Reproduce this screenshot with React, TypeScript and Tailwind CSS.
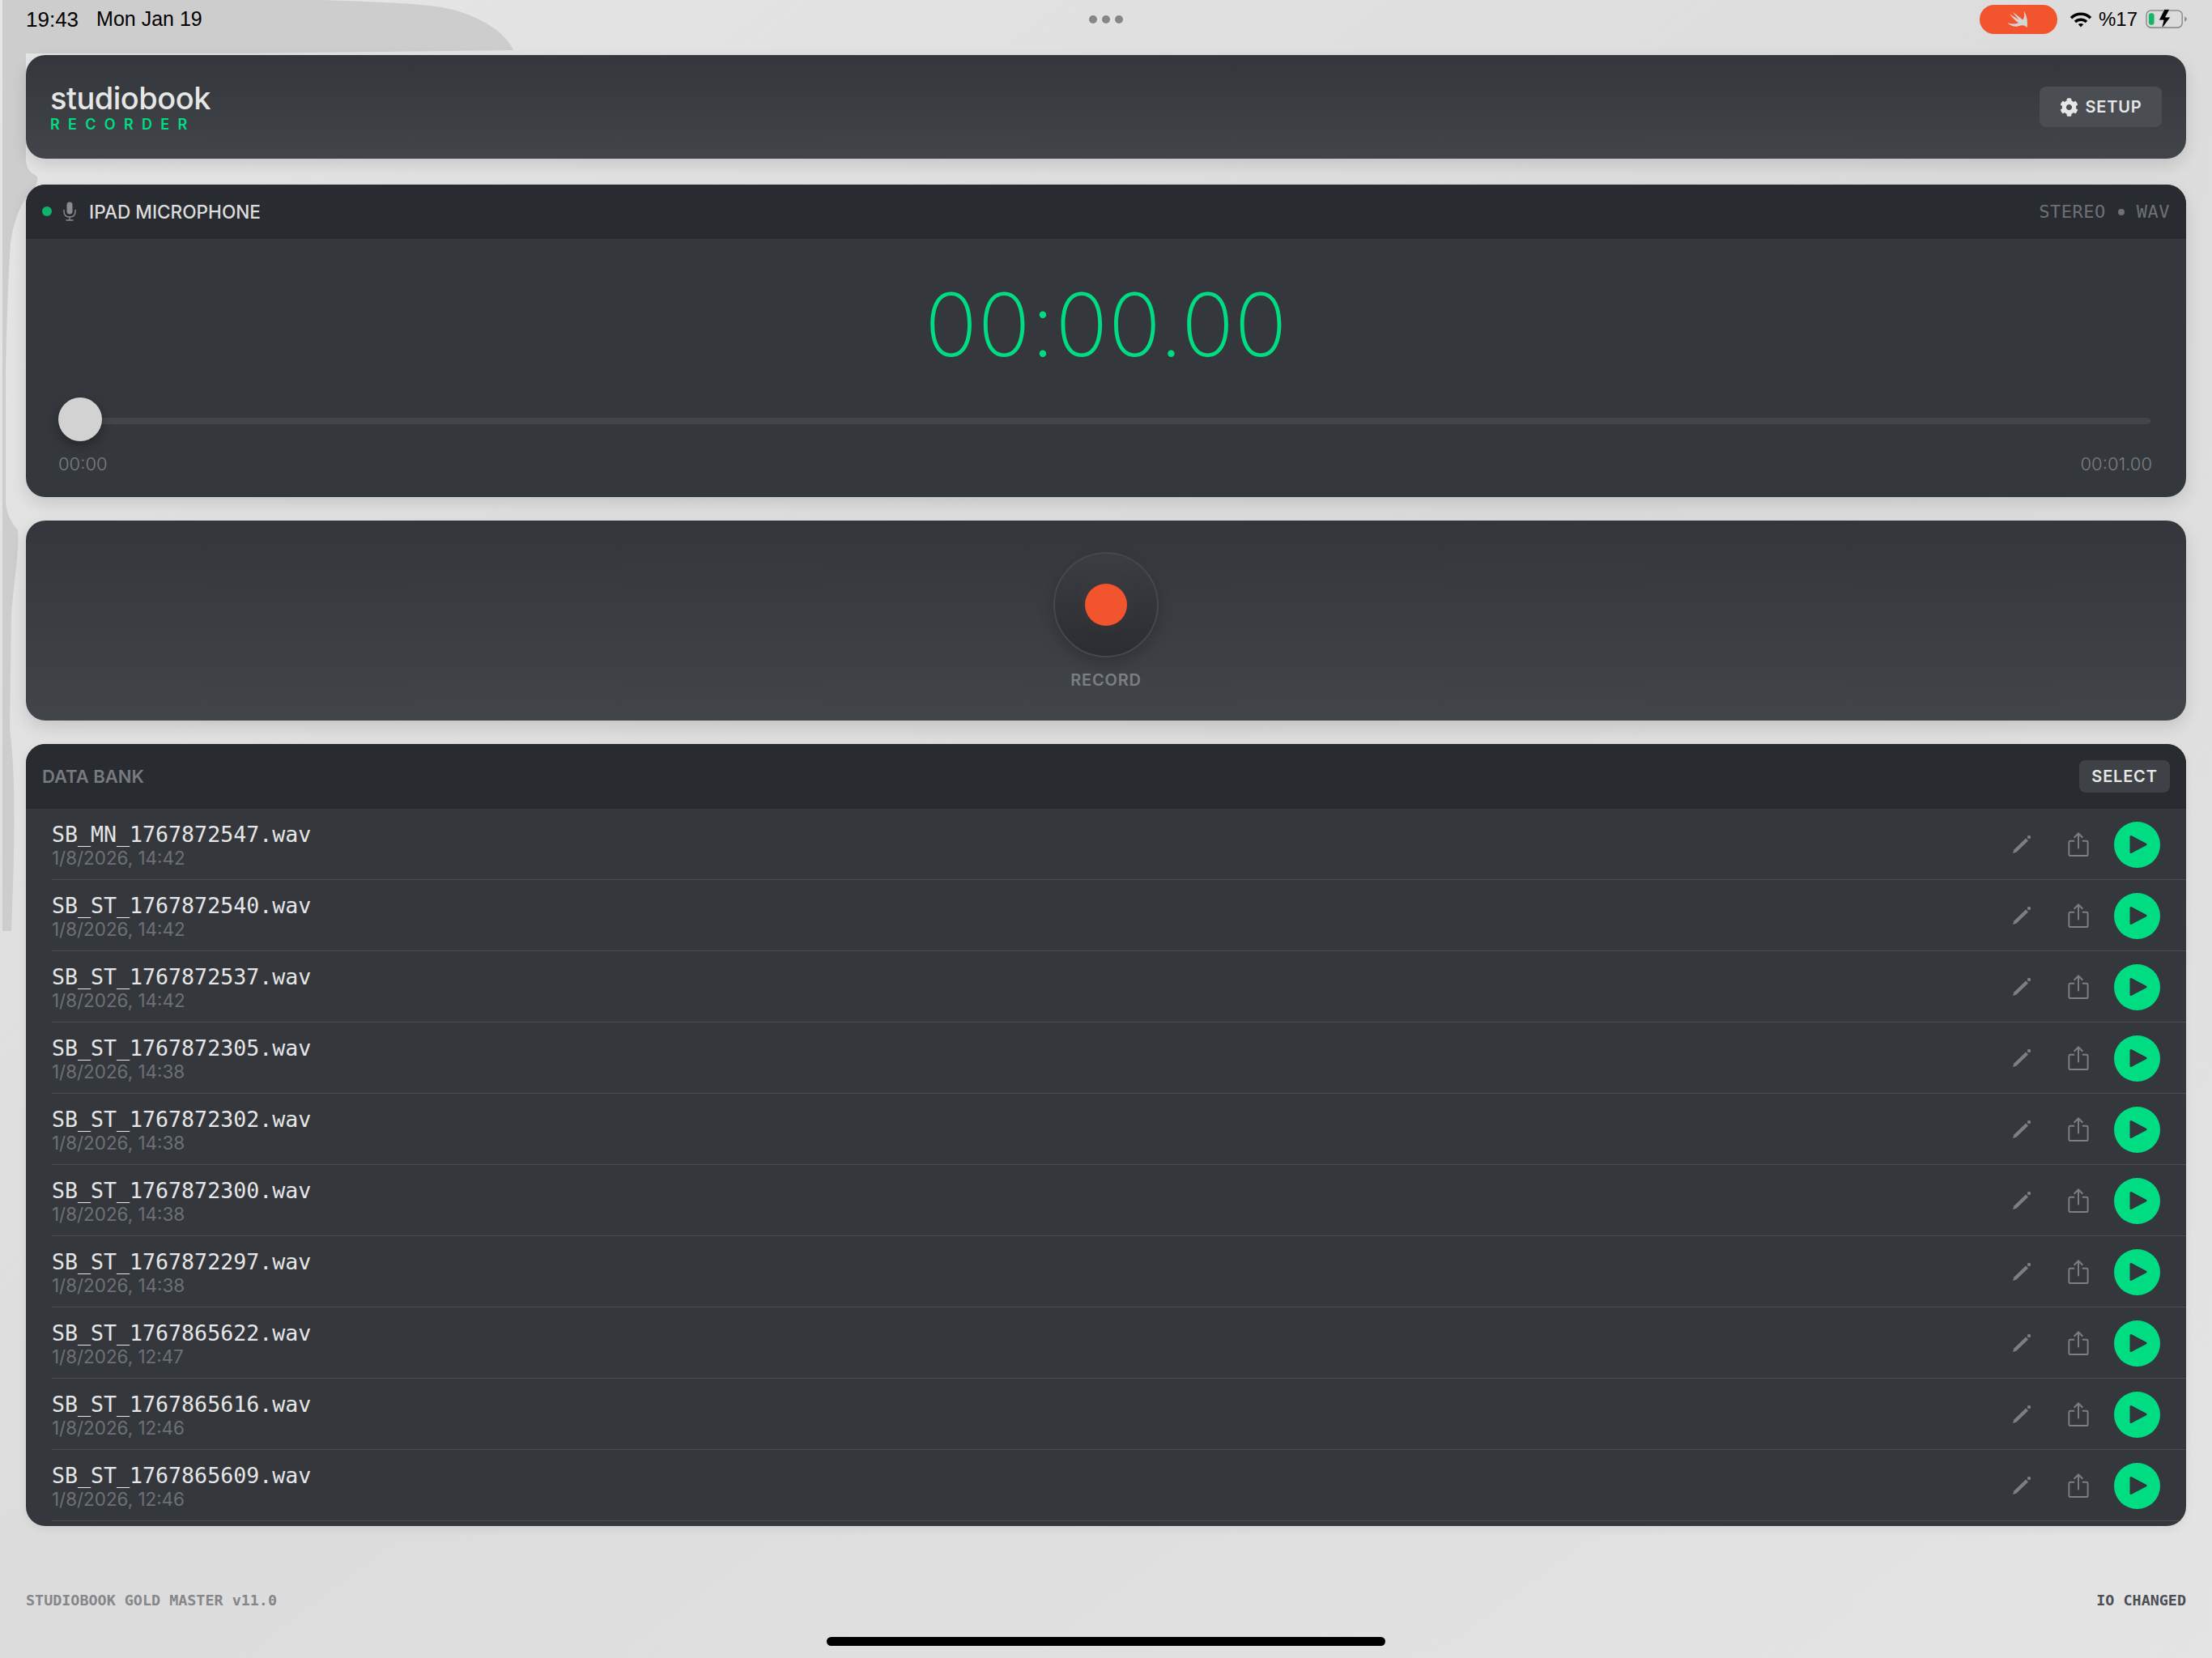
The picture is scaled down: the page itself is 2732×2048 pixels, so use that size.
import React from 'react';
import { FaCog } from 'react-icons/fa';

const SANS = "font-['Inter','Liberation_Sans',sans-serif]";
const MONO = "font-['DejaVu_Sans_Mono','Liberation_Mono',monospace]";

const recordings = [
  { name: 'SB_MN_1767872547.wav', date: '1/8/2026, 14:42' },
  { name: 'SB_ST_1767872540.wav', date: '1/8/2026, 14:42' },
  { name: 'SB_ST_1767872537.wav', date: '1/8/2026, 14:42' },
  { name: 'SB_ST_1767872305.wav', date: '1/8/2026, 14:38' },
  { name: 'SB_ST_1767872302.wav', date: '1/8/2026, 14:38' },
  { name: 'SB_ST_1767872300.wav', date: '1/8/2026, 14:38' },
  { name: 'SB_ST_1767872297.wav', date: '1/8/2026, 14:38' },
  { name: 'SB_ST_1767865622.wav', date: '1/8/2026, 12:47' },
  { name: 'SB_ST_1767865616.wav', date: '1/8/2026, 12:46' },
  { name: 'SB_ST_1767865609.wav', date: '1/8/2026, 12:46' },
];

function PencilIcon() {
  return (
    <svg width="24" height="24" viewBox="0 0 24 24" fill="none">
      <path d="M1 23 L2.5 18.5 L17 4.5 L20 7.5 L5.5 21.5 Z" fill="#7b7e82" />
      <circle cx="21" cy="3" r="2.2" fill="#7b7e82" />
    </svg>
  );
}

function ShareIcon() {
  return (
    <svg width="26" height="31" viewBox="0 0 26 32" fill="none" stroke="#7b7e82" strokeWidth="2">
      <path d="M8 11 H3 Q1 11 1 13 V28 Q1 30 3 30 H23 Q25 30 25 28 V13 Q25 11 23 11 H18" />
      <path d="M13 21 V2 M7.5 7 L13 1.5 L18.5 7" />
    </svg>
  );
}

function PlayIcon() {
  return (
    <svg width="22" height="24" viewBox="0 0 22 24">
      <path d="M2 2.5 L20 12 L2 21.5 Z" fill="#33373c" stroke="#33373c" strokeWidth="3" strokeLinejoin="round" />
    </svg>
  );
}

function MicIcon() {
  return (
    <svg width="16" height="24" viewBox="0 0 16 24" fill="none">
      <rect x="4.5" y="0.5" width="7" height="15" rx="3.5" fill="#8a8c90" />
      <path d="M1 10 V12 Q1 19 8 19 Q15 19 15 12 V10 M8 19 V23 M3.5 23 H12.5" stroke="#8a8c90" strokeWidth="1.4" />
    </svg>
  );
}

function SwiftIcon() {
  return (
    <svg width="27" height="24" viewBox="0 0 28 24">
      <path d="M25.5 22.5 C26.5 15 25.5 7 21.5 1 C22.5 6 22 10 20 12.5 C16 9.5 11 5.5 7 2.5 C9.5 6 12.5 9.5 15 12.5 C11 10 7 7.5 3 5 C6.5 9 10.5 13.5 14.5 16.5 C10.5 18.5 5.5 18 0.5 16.5 C4.5 20.5 10 22 14.5 20.5 C18 19.5 21 19 23 20.5 C24 21.2 25 22 25.5 22.5 Z" fill="#d4d4d4" />
    </svg>
  );
}

function WifiIcon() {
  return (
    <svg width="28" height="20" viewBox="0 0 28 20" fill="none">
      <path d="M2 8.2 C9 1.6 19 1.6 26 8.2" stroke="#000" strokeWidth="3.6" />
      <path d="M7 13 C11 9.4 17 9.4 21 13" stroke="#000" strokeWidth="3.6" />
      <path d="M10.8 16 C12.6 14.6 15.4 14.6 17.2 16 L14 19.5 Z" fill="#000" />
    </svg>
  );
}

function BatteryIcon() {
  return (
    <svg width="52" height="28" viewBox="0 0 54 28">
      <rect x="1" y="2.5" width="46" height="22" rx="6" fill="none" stroke="#8e8e8e" strokeWidth="1.6" />
      <rect x="4" y="6" width="7" height="15" rx="3" fill="#18b566" />
      <path d="M50 10 Q53 12 53 13.5 Q53 15 50 17 Z" fill="#8e8e8e" />
      <path d="M24 1 L17 15 H23 L20 27 L32 11 H25.5 L31 1 Z" fill="#000" stroke="#dcdcdc" strokeWidth="0.8" />
    </svg>
  );
}

function RecordingRow({ name, date }: { name: string; date: string }) {
  return (
    <div className="ml-[32px] flex h-[88px] items-center justify-between border-b border-[#494d52] pr-[32px] pt-[1px]">
      <div className="flex flex-col pt-[2px]">
        <span className={`${MONO} text-[26.6px] leading-[30px] text-[#e6e6e6]`}>{name}</span>
        <span className={`${SANS} mt-[1px] text-[22.4px] leading-[26px] text-[#6d7175]`}>{date}</span>
      </div>
      <div className="flex items-center">
        <span className="flex h-[32px] w-[32px] items-center justify-center">
          <PencilIcon />
        </span>
        <span className="ml-[38px] flex h-[32px] w-[32px] items-center justify-center">
          <ShareIcon />
        </span>
        <button className="ml-[28px] flex h-[57px] w-[57px] items-center justify-center rounded-full bg-[#00dc82] pl-[3px]">
          <PlayIcon />
        </button>
      </div>
    </div>
  );
}

export default function App() {
  return (
    <div className={`${SANS} relative flex h-[2048px] w-[2732px] flex-col overflow-hidden bg-gradient-to-br from-[#e6e6e6] via-[#dcdcdc] to-[#e4e4e4] px-[32px]`}>
      {/* wallpaper stain behind the status bar and down the left edge */}
      <svg className="absolute left-0 top-0" width="640" height="1160" viewBox="0 0 640 1160">
        <path
          d="M3 0 H397 C450 2 500 3 540 8 C590 16 625 40 634 62 L300 66 H32 V200 C34 212 40 214 46 218 C47 226 44 232 36 240 C22 256 16 280 13 300 C10 350 8 400 7 460 V620 C8 635 14 645 22 655 C24 680 18 710 14 760 L12 900 C20 960 18 1050 14 1150 H3 Z"
          fill="#cdcdcd"
        />
      </svg>

      <div className="relative flex h-[68px] shrink-0 items-start justify-between pt-[6px]">
        <div className="flex h-[36px] items-center gap-[22px] font-['Liberation_Sans',sans-serif] text-[25px] text-black">
          <span className="text-[26px]">19:43</span>
          <span>Mon Jan 19</span>
        </div>
        <div className="absolute left-[1313px] top-[19px] flex gap-[6px]">
          <span className="h-[10px] w-[10px] rounded-full bg-[#85858a]" />
          <span className="h-[10px] w-[10px] rounded-full bg-[#85858a]" />
          <span className="h-[10px] w-[10px] rounded-full bg-[#85858a]" />
        </div>
        <div className="mr-[-2px] flex h-[36px] items-center">
          <div className="flex h-[36px] w-[96px] items-center justify-center rounded-full bg-[#f2542d]">
            <SwiftIcon />
          </div>
          <div className="ml-[15px]">
            <WifiIcon />
          </div>
          <span className="ml-[8px] font-['Liberation_Sans',sans-serif] text-[24px] text-black">%17</span>
          <div className="ml-[10px]">
            <BatteryIcon />
          </div>
        </div>
      </div>

      <header className="relative flex h-[128px] shrink-0 items-center justify-between rounded-[24px] bg-gradient-to-b from-[#33373c] to-[#414549] pl-[30px] pr-[30px] shadow-[0_8px_20px_rgba(0,0,0,0.12)]">
        <div className="flex flex-col pb-[1px]">
          <span className="text-[38px] font-medium leading-[44px] tracking-[-0.5px] text-[#e6e6e6]">studiobook</span>
          <span className="mt-[1px] text-[18px] font-semibold leading-[20px] tracking-[10.3px] text-[#00dc82]">RECORDER</span>
        </div>
        <button className="flex h-[50px] w-[151px] items-center justify-center gap-[9px] rounded-[8px] bg-[#4a4e53] text-[20px] font-semibold tracking-[0.8px] text-[#e6e6e6]">
          <FaCog size={23} />
          SETUP
        </button>
      </header>

      <section className="relative mt-[32px] h-[386px] shrink-0 overflow-hidden rounded-[24px] bg-[#34383c] shadow-[0_8px_20px_rgba(0,0,0,0.12)]">
        <div className="flex h-[67px] items-center justify-between bg-[#282b30] pl-[20px] pr-[20px]">
          <div className="flex items-center">
            <span className="h-[12px] w-[12px] rounded-full bg-[#10b26c]" />
            <span className="ml-[14px]">
              <MicIcon />
            </span>
            <span className="ml-[16px] text-[22.6px] font-medium text-[#dcdcdc]">IPAD MICROPHONE</span>
          </div>
          <div className={`${MONO} flex items-center text-[22px] tracking-[0.5px] text-[#6d7175]`}>
            <span>STEREO</span>
            <span className="mx-[15px] h-[8px] w-[8px] rounded-full bg-[#6d7175]" />
            <span>WAV</span>
          </div>
        </div>
        <div className="flex h-[160px] items-end justify-center">
          <span className="text-[108px] font-[150] leading-[108px] tracking-[0.3px] text-[#00dc82]">00:00.00</span>
        </div>
        <div className="relative ml-[40px] mr-[44px] mt-[61px] h-[8px] rounded-full bg-[#42464a]">
          <span className="absolute left-0 top-[-25px] h-[54px] w-[54px] rounded-full bg-[#d2d2d2] shadow-[0_6px_14px_rgba(0,0,0,0.3)]" />
        </div>
        <div className="ml-[40px] mr-[42px] mt-[36px] flex justify-between text-[22px] font-light leading-[26px] text-[#7b7e82]">
          <span>00:00</span>
          <span>00:01.00</span>
        </div>
      </section>

      <section className="relative mt-[29px] flex h-[247px] shrink-0 flex-col items-center rounded-[24px] bg-gradient-to-b from-[#33373c] to-[#414549] pt-[39px] shadow-[0_8px_20px_rgba(0,0,0,0.12)]">
        <button className="flex h-[130px] w-[130px] items-center justify-center rounded-full border-[2px] border-[#44484c] bg-gradient-to-b from-[#3a3e43] to-[#2a2d32] shadow-[0_8px_18px_rgba(0,0,0,0.2)]">
          <span className="h-[52px] w-[52px] rounded-full bg-[#f2542d] shadow-[0_0_24px_rgba(242,84,45,0.08)]" />
        </button>
        <span className="mt-[13px] text-[20px] font-semibold tracking-[0.8px] text-[#7b7e82]">RECORD</span>
      </section>

      <section className="relative mt-[29px] h-[966px] shrink-0 overflow-hidden rounded-[24px] bg-[#34383c] shadow-[0_4px_12px_rgba(0,0,0,0.06)]">
        <div className="flex h-[80px] items-center justify-between bg-[#282b30] pl-[20px] pr-[20px]">
          <span className="text-[22px] font-semibold text-[#777a7e]">DATA BANK</span>
          <button className="flex h-[40px] w-[112px] items-center justify-center rounded-[8px] bg-[#3e4247] text-[20px] font-semibold tracking-[0.8px] text-[#e6e6e6]">
            SELECT
          </button>
        </div>
        {recordings.map((r) => (
          <RecordingRow key={r.name} name={r.name} date={r.date} />
        ))}
      </section>

      <footer className={`${MONO} mt-[80px] flex justify-between text-[18.4px] font-bold leading-[24px]`}>
        <span className="text-[#85868a]">STUDIOBOOK GOLD MASTER v11.0</span>
        <span className="text-[#4b4e54]">IO CHANGED</span>
      </footer>

      <div className="absolute bottom-[15px] left-[1021px] h-[11px] w-[690px] rounded-full bg-black" />
    </div>
  );
}
